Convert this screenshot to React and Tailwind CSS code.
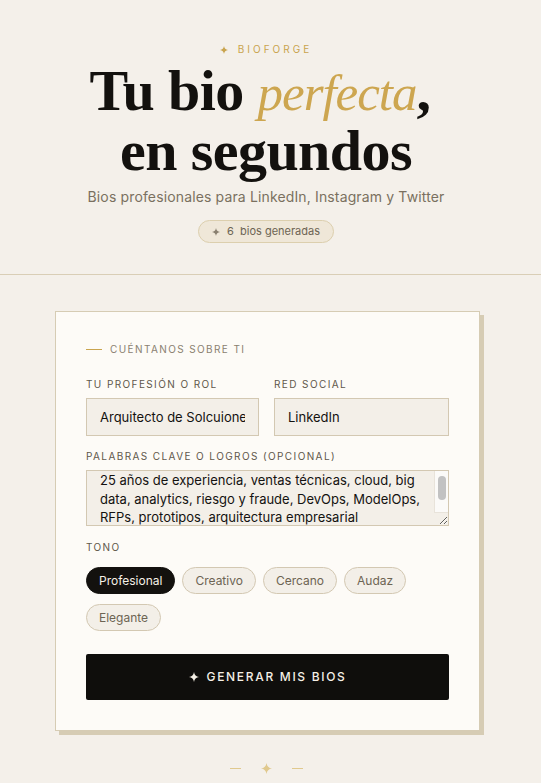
import React, { useState } from 'react';

const Sparkle = ({ className }) => (
  <svg viewBox="0 0 16 16" className={className} fill="currentColor">
    <path d="M8 0 C8.6 4.6 11.4 7.4 16 8 C11.4 8.6 8.6 11.4 8 16 C7.4 11.4 4.6 8.6 0 8 C4.6 7.4 7.4 4.6 8 0 Z" />
  </svg>
);

const tones = ['Profesional', 'Creativo', 'Cercano', 'Audaz', 'Elegante'];

const App = () => {
  const [tone, setTone] = useState('Profesional');
  const [role, setRole] = useState('Arquitecto de Solcuiones');
  const [network, setNetwork] = useState('LinkedIn');
  const [keywords, setKeywords] = useState(
    '25 años de experiencia, ventas técnicas, cloud, big data, analytics, riesgo y fraude, DevOps, ModelOps, RFPs, prototipos, arquitectura empresarial\n'
  );

  return (
    <div className="min-h-[783px] bg-[#f4f0ea] font-['Inter','Noto_Sans',sans-serif] text-[#141210]">
      {/* Hero */}
      <header className="flex flex-col items-center pt-[42px] pb-[31px] pr-[9px]">
        <div className="flex items-center gap-[10px] text-[10px] tracking-[0.3em] text-[#c9a44e]">
          <Sparkle className="w-[8px] h-[8px]" />
          <span>BIOFORGE</span>
        </div>
        <h1 className="mt-[5px] text-center font-['Liberation_Serif','DejaVu_Serif',serif] font-bold text-[58px] leading-[58px] tracking-[-0.01em] text-[#13110e]">
          Tu bio <em className="font-normal italic text-[51px] tracking-[-0.02em] text-[#cda650]">perfecta</em>,<span className="inline-block w-[12px]" />
          <br />
          en segundos
        </h1>
        <p className="mt-[6px] text-[14px] tracking-[0.01em] text-[#7a7060]">
          Bios profesionales para LinkedIn, Instagram y Twitter
        </p>
        <div className="mt-[13px] flex items-center gap-[7px] rounded-full border border-[#dccfae] bg-[#efe7d8] px-[13px] h-[23px] text-[11px] text-[#6d6453]">
          <Sparkle className="w-[8px] h-[8px] text-[#8a8070]" />
          <span>6&nbsp; bios generadas</span>
        </div>
      </header>

      <div className="h-px bg-[#d9ceb6]" />

      {/* Form card */}
      <main className="flex justify-center pt-[36px] pr-[6px]">
        <div className="w-[425px] border border-[#d6ccb4] bg-[#fdfbf7] px-[30px] pt-[30px] pb-[30px] shadow-[4px_4px_0_#d6ccb4]">
          <div className="flex items-center gap-[8px] text-[10px] tracking-[0.14em] text-[#8a8070]">
            <span className="block w-[16px] h-px bg-[#c9a44e]" />
            <span>CUÉNTANOS SOBRE TI</span>
          </div>

          <div className="mt-[20px] grid grid-cols-[173px_1fr] gap-[15px]">
            <label className="flex flex-col">
              <span className="text-[10px] tracking-[0.14em] text-[#5f574a]">TU PROFESIÓN O ROL</span>
              <input
                value={role}
                onChange={(e) => setRole(e.target.value)}
                className="mt-[6px] h-[38px] w-full border border-[#d3c8b2] bg-[#f3efe8] px-[13px] text-[13px] text-[#141210] outline-none"
              />
            </label>
            <label className="flex flex-col">
              <span className="text-[10px] tracking-[0.14em] text-[#5f574a]">RED SOCIAL</span>
              <input
                value={network}
                onChange={(e) => setNetwork(e.target.value)}
                className="mt-[6px] h-[38px] w-full border border-[#d3c8b2] bg-[#f3efe8] px-[13px] text-[13px] text-[#141210] outline-none"
              />
            </label>
          </div>

          <label className="mt-[13px] flex flex-col">
            <span className="text-[10px] tracking-[0.14em] text-[#5f574a]">PALABRAS CLAVE O LOGROS (OPCIONAL)</span>
            <div className="relative mt-[6px]">
              <textarea
                value={keywords}
                onChange={(e) => setKeywords(e.target.value)}
                className="block h-[56px] w-full resize-y overflow-y-auto border border-[#d3c8b2] bg-[#f3efe8] pl-[13px] pr-[16px] pt-0 text-[13px] leading-[18.5px] text-[#141210] outline-none"
              />
              {/* scrollbar */}
              <div className="pointer-events-none absolute right-[1px] top-[1px] bottom-[13px] w-[14px] border-l border-b border-[#e8e3da] bg-[#fbfaf8]">
                <div className="absolute left-[3px] top-[5px] h-[24px] w-[8px] rounded-full bg-[#c2c2c2]" />
              </div>
            </div>
          </label>

          <div className="mt-[14px] text-[10px] tracking-[0.14em] text-[#5f574a]">TONO</div>
          <div className="mt-[12px] flex flex-wrap gap-x-[7px] gap-y-[10px]">
            {tones.map((t) => (
              <button
                key={t}
                type="button"
                onClick={() => setTone(t)}
                className={`h-[27px] rounded-full border px-[12px] text-[12px] ${
                  tone === t
                    ? 'border-[#13110e] bg-[#13110e] text-[#f5f0e6]'
                    : 'border-[#d3c8b2] bg-[#f3efe8] text-[#6d6453]'
                }`}
              >
                {t}
              </button>
            ))}
          </div>

          <button
            type="button"
            className="mt-[23px] flex h-[46px] w-full items-center justify-center gap-[8px] rounded-[2px] bg-[#0f0e0c] text-[12px] font-medium tracking-[0.14em] text-[#f5f0e6]"
          >
            <Sparkle className="w-[10px] h-[10px]" />
            GENERAR MIS BIOS
          </button>
        </div>
      </main>

      {/* Footer ornament */}
      <div className="flex items-center justify-center gap-[20px] pt-[32px] pb-[8px] pr-[9px] text-[#e0c98e]">
        <span className="block w-[11px] h-px bg-[#e0c98e]" />
        <Sparkle className="w-[11px] h-[11px]" />
        <span className="block w-[11px] h-px bg-[#e0c98e]" />
      </div>
    </div>
  );
};

export default App;
